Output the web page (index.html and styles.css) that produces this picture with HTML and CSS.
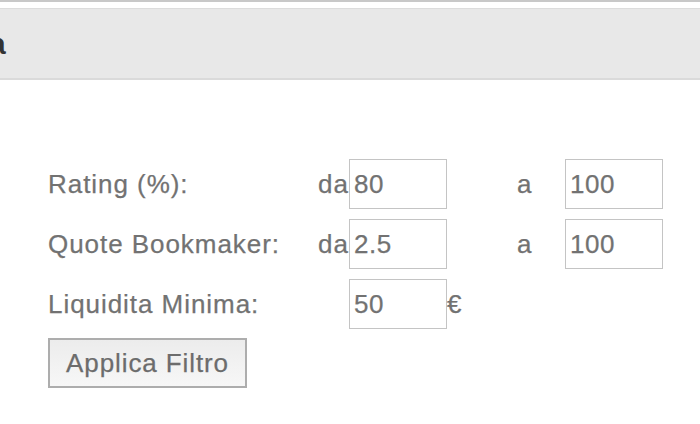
FILE: index.html
```html
<!DOCTYPE html>
<html lang="it">
<head>
<meta charset="utf-8">
<title>Filtro</title>
<link rel="stylesheet" href="styles.css">
</head>
<body>
<div class="topbar"></div>
<div class="header"><h2 class="title">a</h2></div>
<form class="filter">
  <div class="grid">
    <div class="label">Rating (%):</div>
    <div class="pre">da</div>
    <input class="field" type="text" value="80">
    <div class="unit"></div>
    <div class="pre2">a</div>
    <input class="field" type="text" value="100">

    <div class="label">Quote Bookmaker:</div>
    <div class="pre">da</div>
    <input class="field" type="text" value="2.5">
    <div class="unit"></div>
    <div class="pre2">a</div>
    <input class="field" type="text" value="100">

    <div class="label">Liquidita Minima:</div>
    <div class="pre"></div>
    <input class="field" type="text" value="50">
    <div class="unit">€</div>
  </div>
  <button class="apply" type="button">Applica Filtro</button>
</form>
</body>
</html>
```
FILE: styles.css
```css
html, body {
  margin: 0;
  padding: 0;
  background: #ffffff;
  font-family: "Liberation Sans", Arial, Helvetica, sans-serif;
  overflow: hidden;
}
.topbar {
  height: 2px;
  background: #c8c8c8;
  margin-bottom: 6px;
}
.header {
  background: #e8e8e8;
  border-top: 1px solid #dcdcdc;
  border-bottom: 2px solid #dadada;
  height: 69px;
  overflow: hidden;
}
.title {
  margin: 0 0 0 -11px;
  font-size: 30px;
  font-weight: bold;
  line-height: 69px;
  color: #333333;
}
.filter {
  padding: 79px 0 0 48px;
}
.grid {
  display: grid;
  grid-template-columns: 270px 31px 98px 70px 48px 98px;
  grid-auto-rows: 50px;
  row-gap: 10px;
  align-items: center;
  font-size: 26px;
  letter-spacing: 0.95px;
  color: #727272;
  -webkit-text-stroke: 0.25px #727272;
}
.label, .pre, .pre2, .unit {
  white-space: nowrap;
}
.field {
  box-sizing: border-box;
  width: 98px;
  height: 50px;
  margin: 0;
  padding: 0 4px;
  border: 1px solid #c4c4c4;
  border-radius: 0;
  font-family: "Liberation Sans", Arial, sans-serif;
  font-size: 26px;
  letter-spacing: 0.5px;
  color: #727272;
  -webkit-text-stroke: 0.25px #727272;
  background: #ffffff;
  outline: none;
}
.apply {
  box-sizing: border-box;
  display: block;
  margin-top: 9px;
  width: 199px;
  height: 50px;
  padding: 0;
  border: 2px solid #adadad;
  border-radius: 0;
  background: linear-gradient(#ececec, #f7f7f7);
  font-family: "Liberation Sans", Arial, sans-serif;
  font-size: 26px;
  letter-spacing: 0.9px;
  color: #6c6c6c;
  -webkit-text-stroke: 0.25px #6c6c6c;
}
```
